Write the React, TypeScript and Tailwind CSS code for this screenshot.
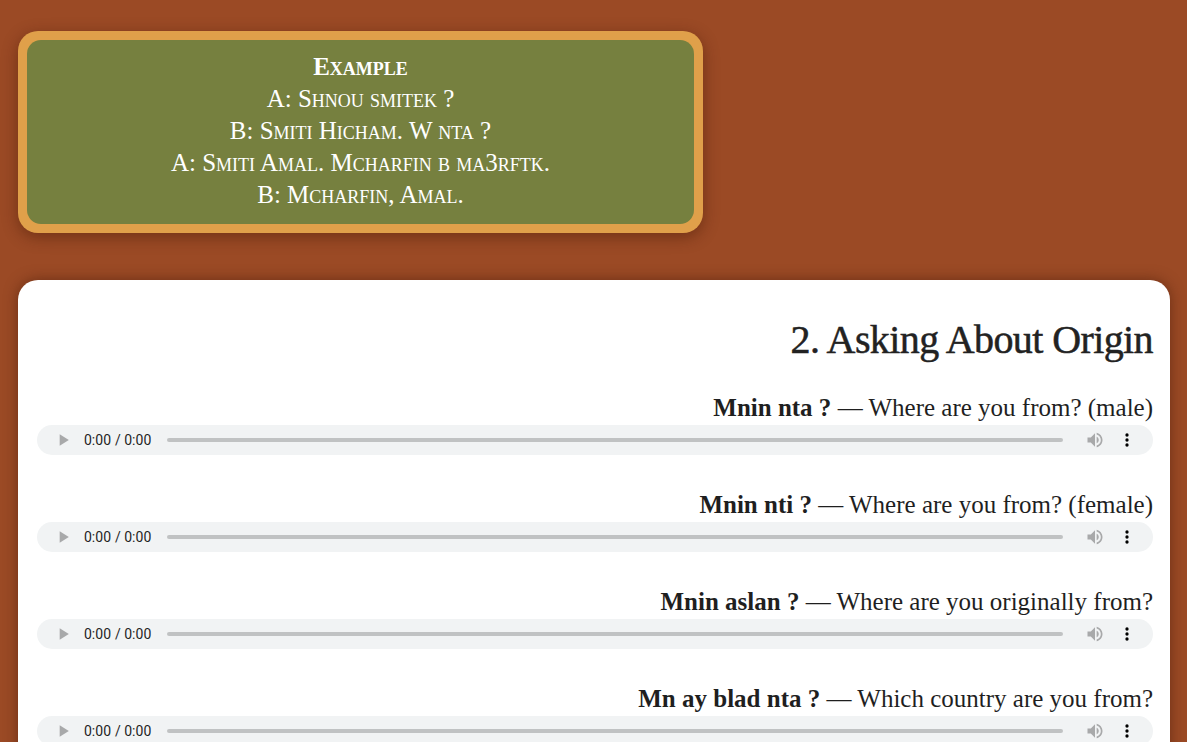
import React from "react";

type Phrase = {
    darija: string;
    english: string;
};

const phrases: Phrase[] = [
    { darija: "Mnin nta ?", english: "Where are you from? (male)" },
    { darija: "Mnin nti ?", english: "Where are you from? (female)" },
    { darija: "Mnin aslan ?", english: "Where are you originally from?" },
    { darija: "Mn ay blad nta ?", english: "Which country are you from?" },
];

const dialogue = [
    "A: Shnou smitek ?",
    "B: Smiti Hicham. W nta ?",
    "A: Smiti Amal. Mcharfin b ma3rftk.",
    "B: Mcharfin, Amal.",
];

const App: React.FC = () => {
    return (
        <div className="min-h-screen bg-[#9b4a25] px-[18px] pt-[31px] font-['Liberation_Serif',serif]">
            <div className="w-[685px] rounded-[20px] bg-[#e0a04a] p-[9px] shadow-[0_4px_16px_rgba(60,20,5,0.45)]">
                <div className="rounded-[14px] bg-[#76803f] pt-[11px] pb-[13px] text-center text-[25px] leading-[32px] text-white [font-variant:small-caps]">
                    <div className="font-bold">Example</div>
                    {dialogue.map((line) => (
                        <div key={line}>{line}</div>
                    ))}
                </div>
            </div>

            <div className="mt-[47px] w-[1152px] rounded-t-[20px] bg-white px-[17px] pt-[38px] pb-10 shadow-[0_0_14px_rgba(60,20,5,0.5)]">
                <h2 className="text-right text-[40px] leading-[44px] tracking-[-0.6px] text-[#222] [-webkit-text-stroke:0.5px_#222]">
                    2. Asking About Origin
                </h2>
                <div className="mt-[31px] flex flex-col gap-[35px]">
                    {phrases.map((p) => (
                        <div key={p.darija} className="flex flex-col">
                            <p className="text-right text-[25px] leading-[30px] text-[#1f1f1f]">
                                <span className="font-bold">{p.darija}</span> — {p.english}
                            </p>
                            <audio controls className="mt-[2px] ml-[2px] h-[30px] w-[calc(100%-2px)]" />
                        </div>
                    ))}
                </div>
            </div>
        </div>
    );
};

export default App;
